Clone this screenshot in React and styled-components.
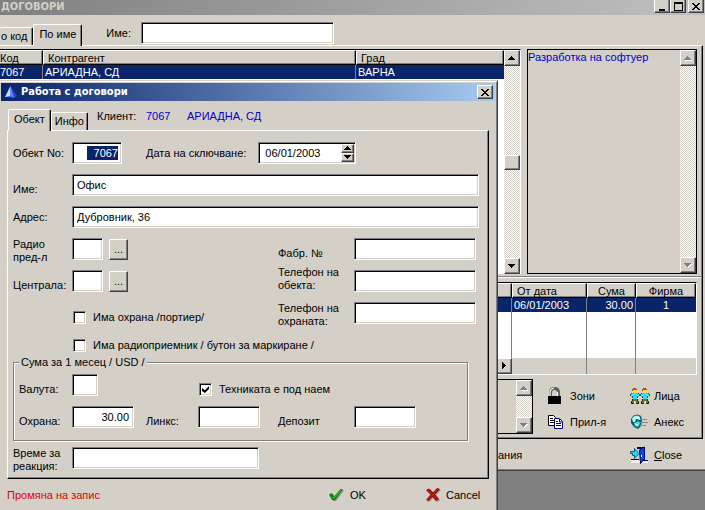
import React from 'react';
import styled, { createGlobalStyle, css } from 'styled-components';

const FACE = '#d4d0c8';
const NAVY = '#0a246a';

const Global = createGlobalStyle`
  * { box-sizing: border-box; }
  body { margin: 0; background: #808080; }
  body, button, input, textarea, table {
    font-family: "Liberation Sans", Arial, sans-serif;
    font-size: 11px;
    line-height: 13px;
    color: #000;
  }
  button { margin: 0; padding: 0; border: 0; background: none; }
`;

const raised = css`
  background: ${FACE};
  border: 1px solid;
  border-color: #fff #404040 #404040 #fff;
  box-shadow: inset -1px -1px #808080;
`;

const sunken = css`
  background: #fff;
  border: 1px solid;
  border-color: #808080 #fff #fff #808080;
  box-shadow: inset 1px 1px #000, inset -1px -1px ${FACE};
`;

const Desktop = styled.div`
  position: relative;
  height: 100vh;
  overflow: hidden;
`;

/* ---------- main window ---------- */

const MainWindow = styled.main`
  background: ${FACE};
  border-bottom: 1px solid #404040;
  box-shadow: inset 0 -1px #808080;
`;

const MainTitle = styled.header`
  display: flex;
  justify-content: space-between;
  align-items: flex-start;
  height: 15px;
  padding: 0 1px 0 1px;
  background: linear-gradient(90deg, #808080, #c0c0c0);
`;

const MainTitleText = styled.h1`
  margin: 0;
  font: bold 11px/13px "DejaVu Sans Condensed", "DejaVu Sans", sans-serif;
  color: ${FACE};
`;

const WindowButtons = styled.div`
  display: flex;
`;

const CaptionButton = styled.button`
  ${raised}
  display: grid;
  place-items: center;
  width: 16px;
  height: ${(p) => (p.$clipped ? 13 : 14)}px;
  border-top-width: ${(p) => (p.$clipped ? 0 : 1)}px;
  margin-left: ${(p) => (p.$apart ? 2 : 0)}px;
`;

const TabBar = styled.div`
  display: flex;
  align-items: flex-end;
  height: ${(p) => (p.$inDialog ? 29 : 30)}px;
  padding-left: ${(p) => (p.$inDialog ? 7 : 0)}px;
`;

const Tab = styled.button`
  height: ${(p) => (p.$active ? 22 : 18)}px;
  padding: 0 ${(p) => (p.$active ? 5 : 3)}px ${(p) => (p.$active ? 2 : 0)}px;
  margin-bottom: ${(p) => (p.$active ? -1 : 0)}px;
  position: relative;
  background: ${FACE};
  border: 1px solid;
  border-color: #fff #000 transparent #fff;
  border-bottom: 0;
  border-radius: 2px 2px 0 0;
  box-shadow: inset -1px 0 #808080;
  white-space: nowrap;
  ${(p) => p.$cut && 'border-left: 0; padding: 0 5px 0 1px;'}
  ${(p) => p.$active && 'z-index: 1;'}
`;

const SearchField = styled.label`
  display: flex;
  align-items: center;
  gap: 10px;
  height: 22px;
  margin: 0 0 1px 24px;
`;

const TextBox = styled.input`
  ${sunken}
  width: ${(p) => (p.$w ? `${p.$w}px` : '100%')};
  min-width: 0;
  height: 22px;
  padding: 0 4px;
  border-radius: 0;
  outline: none;
  text-align: ${(p) => (p.$right ? 'right' : 'left')};
`;

const MainPage = styled.section`
  margin-right: 2px;
  padding: 3px 0 3px;
  border-top: 1px solid #fff;
  border-right: 1px solid #000;
  border-bottom: 1px solid #000;
  box-shadow: inset -1px -1px #808080;
`;

const UpperPane = styled.div`
  display: grid;
  grid-template-columns: 1fr 170px;
  gap: 6px;
  height: 228px;
  padding: 0 4px 2px 0;
  margin-right: 1px;
  border-bottom: 1px solid #808080;
`;

const ListFrame = styled.div`
  display: grid;
  grid-template-columns: 1fr 16px;
  background: #fff;
  border-top: 1px solid #000;
  border-right: 1px solid #fff;
`;

const Memo = styled.div`
  display: grid;
  grid-template-columns: 1fr 16px;
  border: 1px solid #000;
  ${(p) => p.$short && 'height: 55px;'}
`;

const MemoText = styled.textarea`
  min-width: 0;
  width: 100%;
  height: 100%;
  padding: 1px 0 0;
  border: 0;
  outline: none;
  resize: none;
  overflow: hidden;
  background: ${FACE};
  color: #0000d0;
`;

const ScrollTrack = styled.div`
  display: flex;
  flex-direction: column;
  justify-content: space-between;
  background: conic-gradient(#fff 25%, ${FACE} 0 50%, #fff 0 75%, ${FACE} 0) 0 0 / 2px 2px;
`;

const ScrollButton = styled.button`
  ${raised}
  display: grid;
  place-items: center;
  width: 16px;
  height: 16px;
`;

const Thumb = styled.div`
  ${raised}
  height: 15px;
`;

const DataTable = styled.table`
  width: 100%;
  border-collapse: separate;
  border-spacing: 0;
  table-layout: fixed;
  align-self: start;
  background: #fff;
`;

const HeadCell = styled.th`
  height: 15px;
  padding: 0 4px;
  font-weight: normal;
  text-align: ${(p) => p.$align || 'left'};
  line-height: 12px;
  background: ${FACE};
  border: 1px solid;
  border-color: #fff #000 #000 #fff;
  box-shadow: inset -1px -1px #808080;
  ${(p) => p.$cut && 'padding-left: 0; border-left: 0;'}
`;

const Cell = styled.td`
  height: 14px;
  padding: 0 2px;
  line-height: 13px;
  color: #fff;
  background: ${NAVY};
  text-align: ${(p) => p.$align || 'left'};
  border-right: 1px solid #808080;
  &:last-child { border-right: 0; }
  ${(p) => p.$cut && 'padding-left: 0;'}
`;

const FillCell = styled.td`
  height: ${(p) => (p.$bar ? 16 : 46)}px;
  padding: 0;
  background: ${(p) => (p.$bar ? FACE : '#fff')};
  border-right: 1px solid #808080;
  &:last-child { border-right: 0; }
  ${(p) => p.$arrow && 'border-right: 0;'}
  button { margin-left: auto; }
`;

const LowerPane = styled.div`
  margin: 0 1px 0 0;
  padding: 4px 4px 0 0;
  border-top: 1px solid #fff;
`;

const LowerFrame = styled.div`
  border-top: 1px solid #000;
  border-right: 1px solid #fff;
  border-bottom: 1px solid #fff;
`;

const ActionRow = styled.div`
  display: grid;
  grid-template-columns: 1fr 151px;
  gap: 13px;
  padding-top: 4px;
`;

const Actions = styled.div`
  display: grid;
  grid-template-columns: 84px 1fr;
  grid-template-rows: 26px 26px;
  align-content: start;
  padding-top: 4px;
`;

const ActionButton = styled.button`
  display: flex;
  align-items: center;
  gap: 4px;
  text-align: left;
  white-space: nowrap;
  svg { flex: none; }
`;

const MainFooter = styled.footer`
  display: grid;
  grid-template-columns: 1fr 132px 75px;
  height: 31px;
  padding-top: 1px;
`;

/* ---------- dialog ---------- */

const Dialog = styled.section`
  position: absolute;
  top: 80px;
  left: 0;
  right: 207px;
  padding: 2px 2px 40px 1px;
  background: ${FACE};
  border-top: 1px solid ${FACE};
  border-right: 1px solid #404040;
  box-shadow: inset 0 1px #fff, inset -1px 0 #808080;
`;

const DialogTitle = styled.header`
  display: flex;
  align-items: center;
  gap: 4px;
  height: 18px;
  padding: 0 2px 0 4px;
  background: linear-gradient(90deg, ${NAVY}, #a6caf0);
`;

const DialogTitleText = styled.h2`
  flex: 1;
  margin: 0;
  font: bold 11px/16px "DejaVu Sans Condensed", "DejaVu Sans", sans-serif;
  color: #fff;
`;

const Client = styled.p`
  align-self: flex-start;
  display: flex;
  margin: 9px 0 0 9px;
  span { width: 49px; }
  b { font-weight: normal; color: #0000d0; width: 41px; white-space: nowrap; }
`;

const DialogPage = styled.div`
  display: flex;
  flex-direction: column;
  gap: 6px;
  margin: 0 6px;
  padding: 11px 9px 9px 5px;
  border: 1px solid;
  border-color: #fff #000 #000 #fff;
  box-shadow: inset -1px -1px #808080;
`;

const Fields = styled.div`
  display: grid;
  gap: 10px;
`;

const FormRow = styled.div`
  display: grid;
  grid-template-columns:
    ${(p) => (p.$inset ? 53 : 59)}px
    ${(p) => (p.$wide ? '1fr' : '74px 52px 80px 76px 1fr')};
  grid-template-rows: 22px;
  height: 22px;
  align-items: start;
`;

const Label = styled.label`
  align-self: ${(p) => p.$at || 'center'};
  white-space: pre;
`;

const Slot = styled.div`
  display: flex;
  align-items: ${(p) => (p.$low ? 'flex-end' : 'center')};
  gap: ${(p) => (p.$apart ? 12 : 6)}px;
  height: 22px;
  grid-column: ${(p) => p.$col || 'auto'};
`;

const BrowseButton = styled.button`
  ${raised}
  width: 19px;
  height: 21px;
`;

const DateBox = styled.div`
  ${sunken}
  display: flex;
  width: 98px;
  height: 22px;
  padding: 1px 1px 1px 2px;
  input {
    flex: 1;
    min-width: 0;
    padding: 0 4px;
    border: 0;
    outline: none;
    background: none;
  }
`;

const Spinner = styled.div`
  display: grid;
  grid-template-rows: 1fr 1fr;
  width: 13px;
  button {
    ${raised}
    display: grid;
    place-items: center;
    min-height: 0;
  }
`;

const SelectedBox = styled.div`
  ${sunken}
  display: flex;
  justify-content: flex-end;
  width: 50px;
  height: 22px;
  padding: 3px 3px 3px 2px;
  input {
    width: 31px;
    padding: 0;
    border: 0;
    outline: none;
    text-align: right;
    color: #fff;
    background: ${NAVY};
  }
`;

const Check = styled.label`
  display: flex;
  align-items: center;
  gap: 7px;
  white-space: nowrap;
  input {
    ${sunken}
    appearance: none;
    display: grid;
    place-items: center;
    width: 13px;
    height: 13px;
    margin: 0 0 0 1px;
  }
  input:checked::after {
    content: '';
    width: 7px;
    height: 7px;
    background: #000;
    clip-path: polygon(0 28%, 42% 60%, 100% 0, 100% 42%, 42% 100%, 0 72%);
  }
`;

const Group = styled.fieldset`
  display: flex;
  flex-direction: column;
  gap: 10px;
  min-width: 0;
  position: relative;
  margin: 0 11px 0 0;
  padding: 11px 0 12px 5px;
  border: 1px solid #808080;
  box-shadow: 1px 1px #fff, inset 1px 1px #fff;
`;

const Legend = styled.legend`
  float: left;
  position: absolute;
  top: -7px;
  left: 5px;
  padding: 0 2px;
  background: ${FACE};
`;

const DialogFooter = styled.footer`
  display: grid;
  grid-template-columns: 321px 97px 1fr;
  align-items: center;
  height: 32px;
  padding-left: 6px;
`;

const Status = styled.span`
  color: #e00000;
`;

/* ---------- drawings ---------- */

const Arrow = ({ dir, off }) => {
  const d = {
    up: 'M3 0h1v1h1v1h1v1h1v1H0V3h1V2h1V1h1z',
    down: 'M0 0h7v1H6v1H5v1H4v1H3V3H2V2H1V1H0z',
    right: 'M0 0h1v1h1v1h1v1h1v1H3v1H2v1H1v1H0z',
  }[dir];
  const [w, h] = dir === 'right' ? [4, 7] : [7, 4];
  return (
    <svg width={w + 1} height={h + 1} shapeRendering="crispEdges" aria-hidden="true">
      {off && <path d={d} fill="#fff" transform="translate(1 1)" />}
      <path d={d} fill={off ? '#808080' : '#000'} />
    </svg>
  );
};

const Cross = () => (
  <svg width="8" height="7" shapeRendering="crispEdges" aria-hidden="true">
    <path d="M0 0h2v1h1v1h2V1h1V0h2v1H7v1H6v1H5v1h1v1h1v1h1v1H6V6H5V5H3v1H2v1H0V6h1V5h1V4h1V3H2V2H1V1H0z" />
  </svg>
);

const Minimise = () => (
  <svg width="9" height="9" shapeRendering="crispEdges" aria-hidden="true"><path d="M1 7h6v2H1z" /></svg>
);

const Maximise = () => (
  <svg width="9" height="9" shapeRendering="crispEdges" aria-hidden="true"><path fillRule="evenodd" d="M0 0h9v9H0zM1 2v6h7V2z" /></svg>
);

const Triangle = () => (
  <svg width="12" height="12" viewBox="0 0 12 12" aria-hidden="true">
    <path d="M5.5 0 12 10 9 12 0 11z" fill="#2448d8" />
    <path d="M5.5 0 6 10 0 11z" fill="#c8dcff" />
    <path d="M5.5 0 9 12 5 10z" fill="#5a86f8" />
  </svg>
);

const Lock = () => (
  <svg width="20" height="18" viewBox="0 0 20 18" aria-hidden="true">
    <path d="M4.5 9V4.5Q5 1.500 8.500 1.500T12.500 4.500V9" fill="none" stroke="#606060" strokeWidth="3" />
    <path d="M4 9V4.500Q5 1.500 8 1M11.500 5v4" fill="none" stroke="#fff" strokeWidth="1.200" />
    <path d="M2 9h13v8H2z" />
  </svg>
);

const Sheets = () => (
  <svg width="20" height="16" viewBox="0 0 20 16" aria-hidden="true">
    <path d="M2.500 1.500h5l2 2v8h-7z" fill="#fff" stroke="#000" />
    <path d="M4 4.500h3M4 6.500h4M4 8.500h4" stroke="#000" />
    <path d="M8.500 4.500h5l3 3v7h-8z" fill="#fff" stroke="#000080" />
    <path d="M13.500 5v3h3M10 7.500h2M10 9.500h5M10 11.500h5" fill="none" stroke="#000080" />
  </svg>
);

const Figure = ({ x }) => (
  <g transform={`translate(${x} 0)`}>
    <path d="M3 2h4v3H3z" fill="#f4dc50" />
    <path d="M3 0h3v1h1v1H3v1H2V1h1z" fill="#e03818" />
    <path d="M2 5h6v1h1v2H8V7H7v4H3V7H2v1H1V6h1z" fill="#28e0f8" />
    <path d="M1 5h1v1H1zM0 6h1v2H0zM2 8h1v2H2zM8 5h1v1H8zM9 6h1v2H9zM7 8h1v2H7z" fill="#0858a0" />
    <path d="M0 8h2v1H0zM8 8h2v1H8z" fill="#e8c860" />
    <path d="M3 11h4v2h1v2H6v-2H4v2H2v-2h1z" fill="#707030" />
    <path d="M2 11h1v2H2zM7 11h1v2H7zM1 13h1v2H1zM8 13h1v2H8zM1 15h3v1H1zM6 15h3v1H6z" fill="#282810" />
  </g>
);

const People = () => (
  <svg width="20" height="16" viewBox="0 0 20 16" shapeRendering="crispEdges" aria-hidden="true">
    <Figure x={0} />
    <Figure x={10} />
  </svg>
);

const Globe = () => (
  <svg width="20" height="16" viewBox="0 0 20 16" aria-hidden="true">
    <path d="M3 2Q7-1 11 2L12 6 11 12 8 15 4 13 1 9 1 5z" fill="#006070" />
    <path d="M3 3Q7 0 10 3L10 6 6 5 5 8 3 8 2 5z" fill="#a8f8f0" />
    <path d="M4 9 9 7 10 10 8 13 5 12z" fill="#50dcdc" />
    <path d="M6 4h3M5 10l3 1" stroke="#fff" />
    <path d="M10 5.500h7M9 8.500h9M10 11.500h6" stroke="#808890" />
  </svg>
);

const Door = () => (
  <svg width="20" height="18" viewBox="0 0 20 18" aria-hidden="true">
    <path d="M1 14h17v3H1z" fill="#f2f0ea" />
    <path d="M7 1h8v13h3v1h-6V3H7z" fill="#000060" />
    <path d="M9.500 4 14.500 1v12l-4 4.500z" fill="#0050e8" stroke="#000060" />
    <path d="M0.500 5.500h4V2.500L9 7.500l-4.500 5V9.500h-2v-2h-2z" fill="#20e0e0" stroke="#003878" strokeWidth=".8" />
    <path d="M1 13.500h8" stroke="#000" />
    <path d="M11 9h1v2h-1z" fill="#fff" />
  </svg>
);

const Tick = () => (
  <svg width="18" height="15" viewBox="0 0 18 15" aria-hidden="true">
    <path d="M2 7 5 6 7 9 13 2 16 2 8 13 5 13z" fill="#8a8a8a" />
    <path d="M1 6.500 4 5 6 8.500 12.500 1 15 1 7 12 4 12z" fill="#008a10" />
    <path d="M4.500 9 6 10 13 2" stroke="#40c840" fill="none" />
  </svg>
);

const RedCross = () => (
  <svg width="17" height="15" viewBox="0 0 17 15" aria-hidden="true">
    <path d="M2 3 5 1 9 5 13 1 16 2 11 7 15 12 12 14 8 10 4 14 2 13 6 7z" fill="#909090" />
    <path d="M1 2 4 .5 8 4.500 12 0 15 1 10 6.500 14 11 11 13 7.500 9 3.500 13 1 12 5.500 6.500z" fill="#a00808" />
    <path d="M3 2 12 11.500M12.500 1.500 3 11.500" stroke="#c83020" />
  </svg>
);

const VScroll = ({ off, thumb }) => (
  <ScrollTrack>
    <ScrollButton aria-label="Нагоре" disabled={off}><Arrow dir="up" off={off} /></ScrollButton>
    {thumb && <Thumb />}
    <ScrollButton aria-label="Надолу" disabled={off}><Arrow dir="down" off={off} /></ScrollButton>
  </ScrollTrack>
);

const Field = ({ id, label, at, w, value, right }) => (
  <>
    <Label htmlFor={id} $at={at}>{label}</Label>
    <TextBox id={id} $w={w} $right={right} defaultValue={value} />
  </>
);

const ContractsWindow = () => (
  <MainWindow>
    <MainTitle>
      <MainTitleText>ДОГОВОРИ</MainTitleText>
      <WindowButtons>
        <CaptionButton $clipped aria-label="Минимизиране"><Minimise /></CaptionButton>
        <CaptionButton $clipped aria-label="Максимизиране"><Maximise /></CaptionButton>
        <CaptionButton $clipped $apart aria-label="Затваряне"><Cross /></CaptionButton>
      </WindowButtons>
    </MainTitle>
    <TabBar>
      <Tab $cut>о код</Tab>
      <Tab $active>По име</Tab>
      <SearchField>
        Име:
        <TextBox $w={193} />
      </SearchField>
    </TabBar>
    <MainPage>
      <UpperPane>
        <ListFrame>
          <DataTable>
            <colgroup><col width="43" /><col width="313" /><col /></colgroup>
            <thead>
              <tr><HeadCell $cut>Код</HeadCell><HeadCell>Контрагент</HeadCell><HeadCell>Град</HeadCell></tr>
            </thead>
            <tbody>
              <tr><Cell $cut>7067</Cell><Cell>АРИАДНА, СД</Cell><Cell>ВАРНА</Cell></tr>
            </tbody>
          </DataTable>
          <VScroll thumb />
        </ListFrame>
        <Memo>
          <MemoText aria-label="Дейност" readOnly value="Разработка на софтуер" />
          <VScroll off />
        </Memo>
      </UpperPane>
      <LowerPane>
        <LowerFrame>
          <DataTable>
            <colgroup><col /><col width="75" /><col width="49" /><col width="60" /></colgroup>
            <thead>
              <tr>
                <HeadCell />
                <HeadCell>От дата</HeadCell>
                <HeadCell $align="center">Сума</HeadCell>
                <HeadCell $align="center">Фирма</HeadCell>
              </tr>
            </thead>
            <tbody>
              <tr><Cell /><Cell>06/01/2003</Cell><Cell $align="right">30.00</Cell><Cell $align="center">1</Cell></tr>
              <tr><FillCell /><FillCell /><FillCell /><FillCell /></tr>
              <tr>
                <FillCell $bar $arrow><ScrollButton aria-label="Надясно"><Arrow dir="right" /></ScrollButton></FillCell>
                <FillCell $bar /><FillCell $bar /><FillCell $bar />
              </tr>
            </tbody>
          </DataTable>
        </LowerFrame>
        <ActionRow>
          <Memo $short>
            <MemoText aria-label="Бележки" readOnly />
            <VScroll off />
          </Memo>
          <Actions>
            <ActionButton><Lock />Зони</ActionButton>
            <ActionButton><People />Лица</ActionButton>
            <ActionButton><Sheets />Прил-я</ActionButton>
            <ActionButton><Globe />Анекс</ActionButton>
          </Actions>
        </ActionRow>
      </LowerPane>
    </MainPage>
    <MainFooter>
      <span />
      <ActionButton>ания</ActionButton>
      <ActionButton><Door /><span><u>C</u>lose</span></ActionButton>
    </MainFooter>
  </MainWindow>
);

const ContractDialog = () => (
  <Dialog role="dialog" aria-labelledby="dialog-title">
    <DialogTitle>
      <Triangle />
      <DialogTitleText id="dialog-title">Работа с договори</DialogTitleText>
      <CaptionButton aria-label="Затваряне"><Cross /></CaptionButton>
    </DialogTitle>
    <TabBar $inDialog>
      <Tab $active>Обект</Tab>
      <Tab>Инфо</Tab>
      <Client><span>Клиент:</span><b>7067</b><b>АРИАДНА, СД</b></Client>
    </TabBar>
    <DialogPage>
      <Fields>
        <FormRow>
          <Label htmlFor="no">Обект No:</Label>
          <SelectedBox><input id="no" defaultValue="7067" /></SelectedBox>
          <Slot $col="3 / 7" $apart>
            <Label htmlFor="date">Дата на сключване:</Label>
            <DateBox>
              <input id="date" defaultValue="06/01/2003" />
              <Spinner>
                <button aria-label="Увеличи"><Arrow dir="up" /></button>
                <button aria-label="Намали"><Arrow dir="down" /></button>
              </Spinner>
            </DateBox>
          </Slot>
        </FormRow>
        <FormRow $wide><Field id="name" label="Име:" at="end" value="Офис" /></FormRow>
        <FormRow $wide><Field id="addr" label="Адрес:" at="center" value="Дубровник, 36" /></FormRow>
        <FormRow>
          <Label htmlFor="radio" $at="start">{'Радио\nпред-л'}</Label>
          <Slot $col="2 / 5"><TextBox id="radio" $w={31} /><BrowseButton>...</BrowseButton></Slot>
          <Field id="serial" label="Фабр. №" at="end" w={122} />
        </FormRow>
        <FormRow>
          <Label htmlFor="central" $at="end">Централа:</Label>
          <Slot $col="2 / 5"><TextBox id="central" $w={31} /><BrowseButton>...</BrowseButton></Slot>
          <Field id="tel1" label={'Телефон на\nобекта:'} at="end" w={122} />
        </FormRow>
        <FormRow>
          <Slot $col="2 / 5" $low><Check><input type="checkbox" />Има охрана /портиер/</Check></Slot>
          <Field id="tel2" label={'Телефон на\nохраната:'} at="start" w={122} />
        </FormRow>
        <FormRow>
          <Slot $col="2 / 7"><Check><input type="checkbox" />Има радиоприемник / бутон за маркиране /</Check></Slot>
        </FormRow>
      </Fields>
      <Group>
        <Legend>Сума за 1 месец / USD /</Legend>
        <FormRow $inset>
          <Field id="currency" label="Валута:" at="end" w={26} />
          <Slot $col="4 / 7" $low><Check><input type="checkbox" defaultChecked />Техниката е под наем</Check></Slot>
        </FormRow>
        <FormRow $inset>
          <Field id="guard" label="Охрана:" at="end" w={62} value="30.00" right />
          <Field id="links" label="Линкс:" at="end" w={62} />
          <Field id="deposit" label="Депозит" at="end" w={62} />
        </FormRow>
      </Group>
      <FormRow $wide><Field id="reaction" label={'Време за\nреакция:'} at="start" w={187} /></FormRow>
    </DialogPage>
    <DialogFooter>
      <Status role="status">Промяна на запис</Status>
      <ActionButton><Tick />OK</ActionButton>
      <ActionButton><RedCross />Cancel</ActionButton>
    </DialogFooter>
  </Dialog>
);

export default function App() {
  return (
    <>
      <Global />
      <Desktop>
        <ContractsWindow />
        <ContractDialog />
      </Desktop>
    </>
  );
}
